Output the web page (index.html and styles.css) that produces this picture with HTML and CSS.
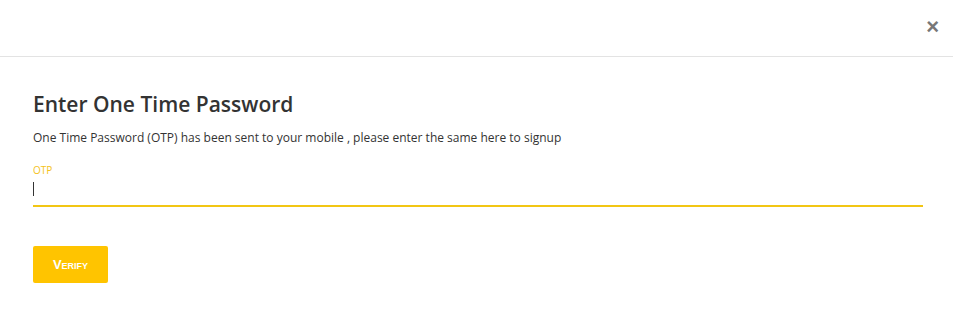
FILE: index.html
```html
<!DOCTYPE html>
<html lang="en">
<head>
    <meta charset="UTF-8">
    <meta name="viewport" content="width=device-width, initial-scale=1.0">
    <title>Enter One Time Password</title>
    <link rel="stylesheet" href="styles.css">
</head>
<body>
    <div class="modal">
        <!-- Header with close button -->
        <div class="modal-header">
            <button class="close" aria-label="Close">&times;</button>
        </div>

        <div class="modal-body">
            <h1>Enter One Time Password</h1>
            <p class="note">One Time Password (OTP) has been sent to your mobile , please enter the same here to signup</p>

            <div class="field">
                <label for="otp">OTP</label>
                <div class="otp-input" id="otp"><span class="caret"></span></div>
            </div>

            <button class="verify">Verify</button>
        </div>
    </div>
</body>
</html>
```

FILE: styles.css
```css
body {
    margin: 0;
    font-family: "Open Sans", Arial, sans-serif;
    background-color: #fff;
    color: #333;
}

.modal {
    width: 953px;
    height: 328px;
    background-color: #fff;
}

.modal-header {
    height: 57px;
    border-bottom: 1px solid #e3e3e3;
    display: flex;
    justify-content: flex-end;
    align-items: center;
    padding-right: 14px;
    box-sizing: border-box;
}

.close {
    background: none;
    border: none;
    padding: 0;
    font-family: Arial, sans-serif;
    font-size: 22px;
    font-weight: bold;
    color: #777;
    line-height: 1;
    cursor: pointer;
    margin-top: -2px;
}

.modal-body {
    padding: 34px 30px 0 33px;
}

h1 {
    margin: 0;
    font-size: 21px;
    font-weight: 600;
    color: #333;
    line-height: 27px;
}

.note {
    margin: 12px 0 0;
    font-size: 12px;
    line-height: 16px;
    color: #333;
}

.field {
    margin-top: 18px;
}

label {
    display: block;
    font-size: 10px;
    line-height: 13px;
    color: #f4c21a;
}

.otp-input {
    height: 23px;
    border-bottom: 2px solid #f2c614;
    padding-top: 5px;
    box-sizing: content-box;
}

.caret {
    display: block;
    width: 1px;
    height: 14px;
    background-color: #333;
}

.verify {
    margin-top: 39px;
    width: 75px;
    height: 37px;
    background-color: #ffc400;
    color: #fff;
    border: none;
    border-radius: 2px;
    font-family: Arial, sans-serif;
    font-size: 13px;
    font-weight: bold;
    font-variant: small-caps;
    text-transform: lowercase;
    cursor: pointer;
    padding: 0;
}

.verify::first-letter {
    text-transform: uppercase;
}
```
